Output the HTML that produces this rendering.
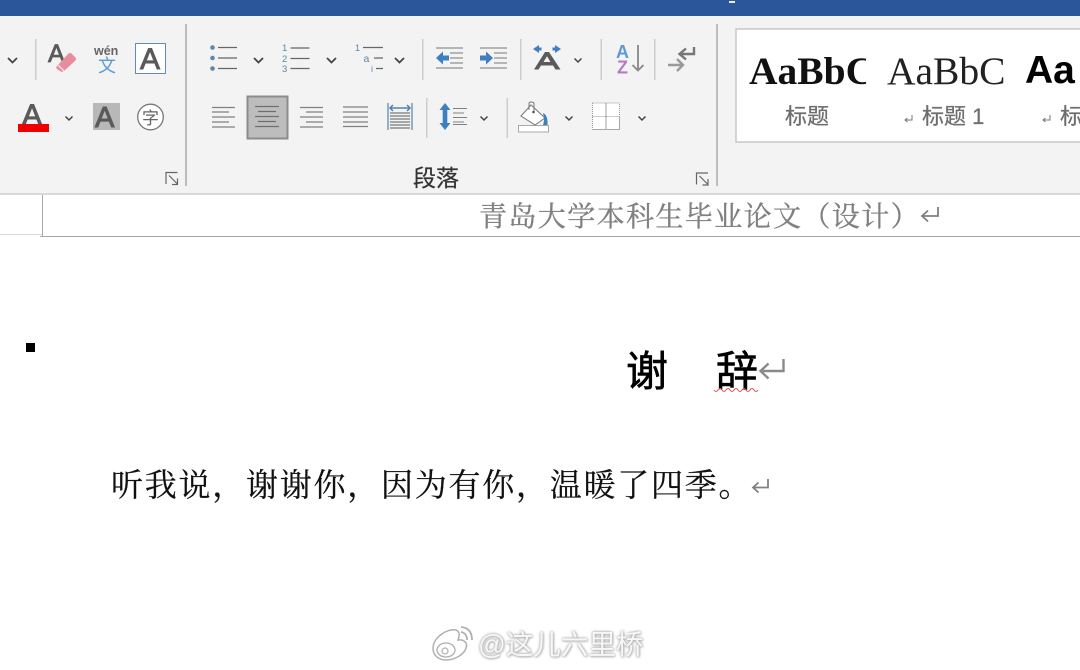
<!DOCTYPE html>
<html lang="zh">
<head>
<meta charset="utf-8">
<title>Word</title>
<style>
html,body{margin:0;padding:0;background:#fff;width:1080px;height:670px;overflow:hidden}
svg{position:absolute;left:0;top:0;display:block}
text{font-family:"Liberation Sans","Noto Sans CJK SC",sans-serif}
.serif{font-family:"Liberation Serif","Noto Serif CJK SC",serif}
.cn{font-family:"Noto Sans CJK SC",sans-serif}
.wm{position:absolute;left:478px;top:625px;font:27.500px/40px "Liberation Sans","Noto Sans CJK SC",sans-serif;color:#f7f7f7;white-space:nowrap;text-shadow:0 0 2px #aaa,0 0 3px #bbb,1px 1px 2px #c4c4c4}
</style>
</head>
<body>
<svg width="1080" height="670" viewBox="0 0 1080 670" xmlns="http://www.w3.org/2000/svg">
<defs>
<path id="chev" d="M-4.500 -2 L0 2.500 L4.500 -2" fill="none" stroke="#444" stroke-width="1.800"/>
<path id="chev2" d="M-3.500 -1.500 L0 2 L3.500 -1.500" fill="none" stroke="#444" stroke-width="1.500"/>
<path id="launch" d="M0.500 12 V0.500 H12 M3.500 3.500 L12 12 M12 6.500 V12.500 H6.500" fill="none" stroke="#666" stroke-width="1.200"/>
</defs>
<rect width="1080" height="16" fill="#2b579a"/>
<rect x="729" y="1" width="6" height="2" fill="#e8eef7"/>
<rect y="16" width="1080" height="178" fill="#f3f3f3"/>
<rect y="193" width="1080" height="2" fill="#d8d8d8"/>

<!-- separators -->
<g fill="#cccccc">
<rect x="35" y="39" width="1.500" height="41"/>
<rect x="422" y="39" width="1.500" height="41"/>
<rect x="520" y="39" width="1.500" height="41"/>
<rect x="600.500" y="39" width="1.500" height="41"/>
<rect x="654" y="39" width="1.500" height="41"/>
<rect x="426" y="98" width="1.500" height="40"/>
<rect x="506.500" y="98" width="1.500" height="40"/>
</g>
<rect x="185" y="24" width="2" height="162" fill="#bcbcbc"/>
<rect x="716" y="24" width="2" height="162" fill="#bcbcbc"/>

<!-- chevrons -->
<use href="#chev" x="12.500" y="60"/>
<use href="#chev" x="258.500" y="60"/>
<use href="#chev" x="331.500" y="60"/>
<use href="#chev" x="399.500" y="60"/>
<use href="#chev2" x="578" y="60"/>
<use href="#chev2" x="69" y="118"/>
<use href="#chev2" x="484" y="118"/>
<use href="#chev2" x="569" y="118"/>
<use href="#chev2" x="642" y="118"/>

<!-- clear format -->
<text x="48" y="62" font-size="25" fill="#5a5a5a" stroke="#5a5a5a" stroke-width=".8">A</text>
<path d="M57 66 L68 54 Q70 52 72 54 L75 57 Q77 59 75 61 L64 71 Q62 72.500 60 71 L57 69 Q55.500 67.500 57 66Z" fill="#e98c9b"/>
<path d="M58 65 L64 71" stroke="#f3f3f3" stroke-width="1.200"/>
<!-- wen -->
<text x="94" y="55" font-size="12.500" font-weight="bold" fill="#666">wén</text>
<text x="98" y="72" font-size="18" fill="#5b9bd5" class="cn">文</text>
<!-- boxed A -->
<rect x="135.500" y="43.500" width="30" height="30" fill="#fff" stroke="#5f8db8"/>
<text x="140" y="69" font-size="30" fill="#5a5a5a" stroke="#5a5a5a" stroke-width=".9">A</text>

<!-- font colour -->
<text x="22" y="125" font-size="30" fill="#5a5a5a" stroke="#5a5a5a" stroke-width="1">A</text>
<rect x="18" y="124" width="31" height="8" fill="#f00000"/>
<!-- char shading -->
<rect x="93" y="103" width="27" height="27" fill="#b8b8b8"/>
<text x="95" y="127" font-size="29" fill="#5a5a5a" stroke="#5a5a5a" stroke-width="1">A</text>
<!-- enclosed char -->
<circle cx="150.500" cy="117" r="12.800" fill="#fff" stroke="#777" stroke-width="1.300"/>
<text x="142" y="124" font-size="17" fill="#666" class="cn">字</text>

<use href="#launch" x="165.500" y="172"/>
<use href="#launch" x="696" y="172.500"/>

<!-- bullets -->
<g fill="#5b87ad"><circle cx="212.500" cy="47.500" r="2.300"/><circle cx="212.500" cy="58" r="2.300"/><circle cx="212.500" cy="68.500" r="2.300"/></g>
<path d="M218 47.500H237M218 58H237M218 68.500H237" stroke="#666" stroke-width="1.200"/>
<!-- numbering -->
<g font-size="9.500" fill="#5b87ad"><text x="282" y="51">1</text><text x="282" y="62">2</text><text x="282" y="72">3</text></g>
<path d="M290.500 48H309.500M290.500 58.500H309.500M290.500 68.500H309.500" stroke="#666" stroke-width="1.200"/>
<!-- multilevel -->
<g fill="#5b87ad"><text x="355" y="51" font-size="9">1</text><text x="363.500" y="62" font-size="10.500">a</text><text x="371" y="72" font-size="9">i</text></g>
<path d="M363 47.500H383M374 58H383M376 68.500H383" stroke="#666" stroke-width="1.200"/>

<!-- indents -->
<path d="M436 48H463M436 68H463M450 53H463M450 58H463M450 63H463" stroke="#777" stroke-width="1.100"/>
<path d="M436 58 L443 51.500 V55.500 H449 V60.500 H443 V64.500Z" fill="#3f7fbf"/>
<path d="M480 48H507M480 68H507M494 53H507M494 58H507M494 63H507" stroke="#777" stroke-width="1.100"/>
<path d="M493 58 L486 51.500 V55.500 H480 V60.500 H486 V64.500Z" fill="#3f7fbf"/>
<!-- A with arrows -->
<path d="M534 69.500 L545 52 H549 L560.500 69.500 H555.500 L553 65.500 H541 L538.500 69.500Z M543.500 62 H550.500 L547 56.300Z" fill="#5a5a5a" fill-rule="evenodd"/>
<path d="M533 49 L539 45 V47.500 H541.500 V50.500 H539 V53Z M561 49 L555 45 V47.500 H552.500 V50.500 H555 V53Z" fill="#3f7fbf"/>
<!-- sort -->
<text x="616" y="58" font-size="18" font-weight="bold" fill="#5b9bd5">A</text>
<text x="617" y="73.500" font-size="18" font-weight="bold" fill="#b57cc4">Z</text>
<path d="M638 45V70M632.500 65L638 70.500L643.500 65" fill="none" stroke="#888" stroke-width="1.800"/>
<!-- ltr return -->
<path d="M694 47V54H680M686 48.500L679.500 54L686 59.500" fill="none" stroke="#777" stroke-width="2.400"/>
<path d="M668 65H682M677 59L683 65L677 71" fill="none" stroke="#999" stroke-width="2.400"/>

<!-- alignment -->
<path d="M212 107.500H235M212 112H229M212 117H235M212 122H229M212 127H235" stroke="#808080" stroke-width="1.200"/>
<rect x="247.500" y="96.500" width="40" height="42" fill="#bdbdbd" stroke="#8c8c8c" stroke-width="2"/>
<path d="M255 106.500H279M258 111.500H276M255 116.500H279M258 121.500H276M255 126.500H279" stroke="#6f6f6f" stroke-width="1.200"/>
<path d="M300 107.500H323M306 112H323M300 117H323M306 122H323M300 127H323" stroke="#808080" stroke-width="1.200"/>
<path d="M343 107H368M343 112H368M343 117H368M343 122H368M343 126.500H368" stroke="#808080" stroke-width="1.200"/>
<!-- distributed -->
<path d="M388 103V130M412 103V130" stroke="#4f83b5" stroke-width="1.200"/>
<path d="M390 108H410M393 105L390 108L393 111M407 105L410 108L407 111" fill="none" stroke="#4f83b5" stroke-width="1.500"/>
<path d="M390 113H410M390 116H410M390 119H410M390 122H410M390 125H410M390 128H410" stroke="#777" stroke-width="1.200"/>
<!-- line spacing -->
<path d="M445 103 L450.500 110 H447.300 V123 H450.500 L445 130 L439.500 123 H442.700 V110 H439.500Z" fill="#3f7fbf"/>
<path d="M453 108.500H467M453 113H464M453 117.500H467M453 122H464M453 124.500H467" stroke="#808080" stroke-width="1.100"/>
<!-- shading bucket -->
<rect x="518.500" y="125.500" width="30" height="6.500" fill="#fff" stroke="#a8a8a8"/>
<path d="M521 116 L531 105 L545 118 L535 125Z" fill="#fff" stroke="#777" stroke-width="1"/>
<path d="M529 110 V103.500 Q529 102 531 102 Q534 102 534 104 V112" fill="none" stroke="#777"/>
<circle cx="533.500" cy="112" r="1.300" fill="#555"/>
<path d="M543 113 Q548 115 547.500 125 H543 Q545 120 543 113Z" fill="#3f7fbf"/>
<!-- borders -->
<rect x="592.500" y="103" width="27" height="26.500" fill="#fff"/>
<path d="M592.500 103H619.500V116M592.500 103V129.500M592.500 116.500H619.500" fill="none" stroke="#999" stroke-dasharray="1 1"/>
<path d="M606 103V129.500M592 129.500H620M619.500 116V129.500" fill="none" stroke="#aaa" stroke-width="1.100"/>

<text x="413" y="186" font-size="23" fill="#333" stroke="#333" stroke-width=".25" class="cn">段落</text>

<!-- styles gallery -->
<rect x="736" y="29" width="345" height="113" fill="#fff" stroke="#c8c8c8" stroke-width="1.500"/>
<svg x="749" y="40" width="117" height="60" viewBox="0 0 117 60">
<text x="0" y="44" font-size="39.500" font-weight="bold" fill="#111" class="serif">AaBbC</text>
</svg>
<text x="887" y="84" font-size="39.500" fill="#222" class="serif">AaBbC</text>
<text x="1025" y="83" font-size="39" font-weight="bold" fill="#000">Aa</text>
<g fill="#6e6e6e" stroke="#6e6e6e" stroke-width=".25">
<text x="785" y="124" font-size="22">标题</text>
<text x="922" y="124" font-size="22">标题 1</text>
<text x="1060" y="124" font-size="22">标</text>
</g>
<path d="M912 115V120H905.500M907.500 118L905 120L907.500 122" fill="none" stroke="#777"/>
<path d="M1050 115V120H1043.500M1045.500 118L1043 120L1045.500 122" fill="none" stroke="#777"/>

<!-- header area -->
<rect x="42" y="195" width="1" height="41" fill="#a8a8a8"/>
<rect y="234" width="42" height="1" fill="#d8d8d8"/>
<rect x="40" y="236" width="1040" height="1" fill="#a6a6a6"/>
<text x="479" y="226" font-size="28" letter-spacing="1.400" fill="#808080" stroke="#808080" stroke-width=".35" class="serif">青岛大学本科生毕业论文（设计）</text>
<path d="M938 207V216H922.500M928 210.500L922 216L928 221.500" fill="none" stroke="#808080" stroke-width="1.800"/>

<!-- body -->
<rect x="26" y="343" width="9" height="9" fill="#000"/>
<text x="626" y="386" font-size="42" fill="#000" stroke="#000" stroke-width=".6" class="cn">谢</text>
<text x="716" y="386" font-size="42" fill="#000" stroke="#000" stroke-width=".6" class="cn">辞</text>
<path d="M783.500 359V371H761M768.500 363.500L760.500 371L768.500 378.500" fill="none" stroke="#8a8a8a" stroke-width="2.400"/>
<path d="M714 390 q2 3 4 0 t4 0 t4 0 t4 0 t4 0 t4 0 t4 0 t4 0 t4 0 t4 0 t4 0" fill="none" stroke="#d05a5a" stroke-width="1.100"/>
<text x="111" y="496" font-size="32" letter-spacing="1.750" fill="#111" stroke="#111" stroke-width=".25" class="serif">听我说，谢谢你，因为有你，温暖了四季。</text>
<path d="M768 479V487.500H753.500M758.500 482.500L753 487.500L758.500 492.500" fill="none" stroke="#808080" stroke-width="1.800"/>

<!-- weibo logo -->
<g fill="none" stroke="#b0b0b0">
<path d="M433 648 C433 638 447 628 456 630 C461 632 459 637 458 640 C464 639 468 643 466 648 C464 655 454 660 446 660 C438 660 433 655 433 648Z" fill="#fff" stroke-width="1.500"/>
<ellipse cx="446" cy="650" rx="9" ry="7" stroke-width="1.300"/>
<circle cx="445" cy="651" r="3" stroke-width="1.200"/>
<path d="M461 632 Q467 633 467 640" stroke-width="1.800"/>
<path d="M461 627 Q472 628 472 640" stroke-width="1.800"/>
</g>
</svg>
<div class="wm">@这儿六里桥</div>
</body>
</html>
